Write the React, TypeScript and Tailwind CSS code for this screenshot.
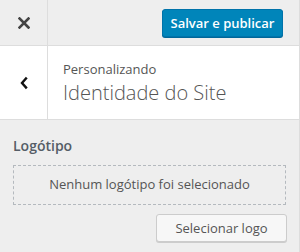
export default function App() {
  return (
    <div
      className="w-[300px] h-[252px] bg-[#eee] border-r border-[#ddd] overflow-hidden text-[#555]"
      style={{ fontFamily: '"Open Sans", sans-serif' }}
    >
      {/* Top actions bar */}
      <div className="flex h-[46px] border-b border-[#ddd]">
        <button className="w-[48px] flex items-center justify-center border-r border-[#ddd] text-[#444]">
          <svg className="w-[12px] h-[12px]" viewBox="0 0 12 12" fill="none" stroke="currentColor" strokeWidth={2.6} strokeLinecap="square">
            <path d="M1.5 1.5l9 9M10.5 1.5l-9 9" />
          </svg>
        </button>
        <div className="flex-1 flex items-start justify-end pt-[9px] pr-[16px]">
          <button className="h-[28px] w-[121px] rounded-[3px] bg-[#0085ba] border border-[#0073aa] shadow-[0_1px_0_#006799] text-white text-[13px] font-semibold leading-none">
            Salvar e publicar
          </button>
        </div>
      </div>

      {/* Section header */}
      <div className="flex h-[74px] bg-white border-b border-[#ddd]">
        <button className="w-[48px] flex items-center justify-center border-r border-[#ddd] text-[#111]">
          <svg className="w-[10px] h-[14px]" viewBox="0 0 10 14" fill="none" stroke="currentColor" strokeWidth={2.4} strokeLinecap="square">
            <path d="M7 2.5L3 7l4 4.5" />
          </svg>
        </button>
        <div className="flex-1 pl-[15px] pt-[15px]">
          <div className="text-[13px] leading-[17px] text-[#555]">Personalizando</div>
          <div className="text-[20px] leading-[26px] font-light text-[#555] mt-[2px]">Identidade do Site</div>
        </div>
      </div>

      {/* Logo control */}
      <div className="px-[13px] pt-[16px]">
        <div className="text-[14px] font-semibold leading-[20px] text-[#555d66]">Logótipo</div>
        <div className="mt-[9px] h-[40px] w-[273px] border border-dashed border-[#b4b9be] flex items-center justify-center text-[13px] text-[#555]">
          Nenhum logótipo foi selecionado
        </div>
        <div className="flex justify-end mt-[9px] pr-[0px] w-[274px]">
          <button className="h-[28px] w-[131px] rounded-[3px] bg-[#f7f7f7] border border-[#ccc] shadow-[0_1px_0_#ccc] text-[13px] text-[#555] leading-none">
            Selecionar logo
          </button>
        </div>
      </div>
    </div>
  );
}
